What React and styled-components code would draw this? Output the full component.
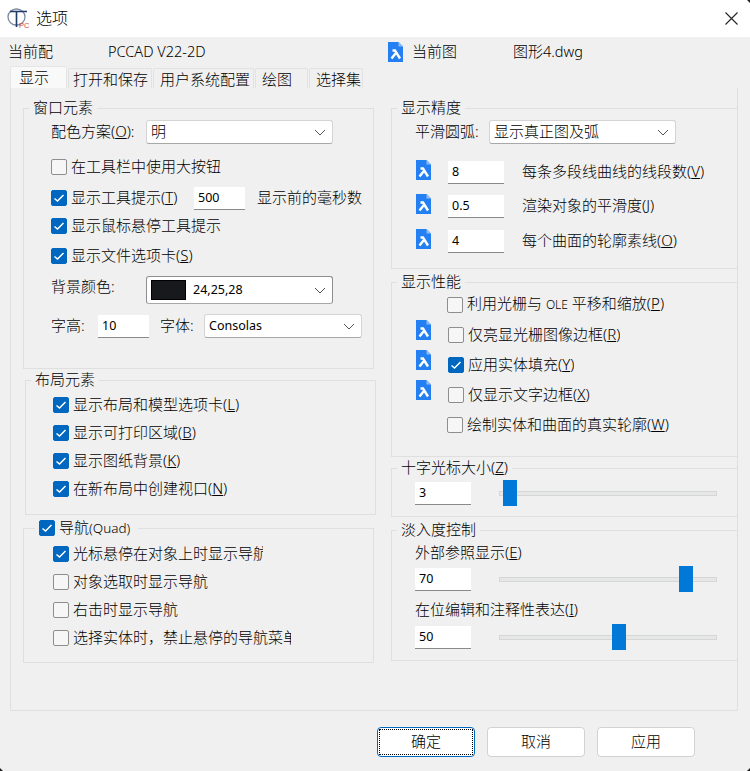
import React from "react";
import styled, { createGlobalStyle } from "styled-components";

const GlobalStyle = createGlobalStyle`
  html, body {
    margin: 0;
    background: #f0f0f0;
  }
  body {
    font-family: "Noto Sans", "Noto Sans CJK SC", sans-serif;
    font-size: 15px;
    font-weight: 300;
    line-height: 20px;
    color: #000;
  }
`;

const Dialog = styled.div`
  position: relative;
  display: flex;
  flex-direction: column;
  width: 750px;
  height: 771px;
  overflow: hidden;
  background: #f0f0f0;
`;
const Corner = styled.div`
  position: absolute;
  width: 3px;
  height: 3px;
  background: #222;
  ${(p) => (p.$left ? "left: 0;" : "right: 0;")}
  ${(p) => (p.$top ? "top: 0;" : "bottom: 0;")}
  clip-path: ${(p) =>
    p.$left
      ? "polygon(0 0, 100% 100%, 0 100%)"
      : p.$top
      ? "polygon(0 0, 100% 0, 100% 100%)"
      : "polygon(100% 0, 100% 100%, 0 100%)"};
`;
const TitleBar = styled.div`
  display: flex;
  align-items: center;
  flex: none;
  height: 37px;
  padding: 0 12px 0 7px;
  background: #fff;
`;
const Title = styled.span`
  margin-left: 4px;
  padding-bottom: 2px;
  font-size: 16px;
`;
const CloseButton = styled.svg`
  margin-left: auto;
  width: 13px;
  height: 13px;
`;
const InfoRow = styled.div`
  display: flex;
  align-items: center;
  flex: none;
  height: 29px;
  padding-left: 8px;
`;
const InfoText = styled.span`
  flex: none;
  width: ${(p) => p.$w}px;
  padding-bottom: 2px;
  white-space: nowrap;
`;
const FileMark = styled.svg`
  flex: none;
  width: 15px;
  height: 20px;
  margin-left: ${(p) => p.$ml || 0}px;
  margin-right: ${(p) => p.$mr || 0}px;
  align-self: ${(p) => (p.$top ? "flex-start" : "center")};
`;
const TabStrip = styled.div`
  display: flex;
  align-items: flex-end;
  flex: none;
  gap: 1px;
  height: 22px;
  margin-left: 10px;
`;
const Tab = styled.div`
  box-sizing: border-box;
  width: ${(p) => p.$w}px;
  height: ${(p) => (p.$active ? 22 : 20)}px;
  padding-left: ${(p) => p.$pl}px;
  border: 1px solid ${(p) => (p.$active ? "#e6e6e6" : "#e2e2e2")};
  border-bottom: none;
  border-radius: 2px 2px 0 0;
  background: ${(p) => (p.$active ? "#f9f9f9" : "#f0f0f0")};
  line-height: 20px;
  white-space: nowrap;
`;
const Pane = styled.div`
  box-sizing: border-box;
  display: flex;
  flex: none;
  width: 728px;
  height: 623px;
  margin-left: 10px;
  padding-top: 20px;
  border: 1px solid #e0e0e0;
  border-top: none;
`;
const LeftColumn = styled.div`
  flex: none;
  width: 380px;
  padding-left: 12px;
  box-sizing: border-box;
`;
const RightColumn = styled.div`
  flex: none;
  width: 347px;
`;
const Group = styled.div`
  position: relative;
  box-sizing: border-box;
  width: ${(p) => p.$w || "100%"};
  height: ${(p) => p.$h}px;
  margin-top: ${(p) => p.$mt || 0}px;
  margin-left: ${(p) => p.$ml || 0}px;
  padding-left: ${(p) => p.$pl}px;
  border: 1px solid #dfdfdf;
  display: flow-root;
`;
const Legend = styled.div`
  position: absolute;
  top: -11px;
  left: ${(p) => p.$left || 5}px;
  display: flex;
  align-items: center;
  gap: 4px;
  height: 20px;
  padding: 0 ${(p) => p.$pr || 4}px 0 4px;
  background: #f0f0f0;
  white-space: nowrap;
`;
const LegendText = styled.span`
  padding-bottom: 2px;
`;
const Row = styled.div`
  display: flex;
  align-items: center;
  height: ${(p) => p.$h || 24}px;
  margin-top: ${(p) => p.$mt || 0}px;
`;
const Text = styled.span`
  flex: none;
  box-sizing: content-box;
  white-space: nowrap;
  overflow: hidden;
  width: ${(p) => (p.$w ? `${p.$w}px` : "auto")};
  margin-left: ${(p) => p.$ml || 0}px;
  padding-bottom: 2px;
  align-self: ${(p) => (p.$top ? "flex-start" : "center")};
`;
const Latin = styled.span`
  font-size: ${(p) => p.$size}px;
  font-weight: 300;
`;
const Box = styled.span`
  box-sizing: border-box;
  display: flex;
  align-items: center;
  justify-content: center;
  flex: none;
  width: 16px;
  height: 16px;
  margin-right: 4px;
  border-radius: 2px;
  border: 1px solid ${(p) => (p.$on ? "#0067c0" : "#8e8e8e")};
  background: ${(p) => (p.$on ? "#0067c0" : "#f6f6f6")};
`;
const LegendBox = styled(Box)`
  margin-right: 0;
`;
const Select = styled.div`
  box-sizing: border-box;
  display: flex;
  align-items: center;
  flex: none;
  width: ${(p) => p.$w}px;
  height: ${(p) => p.$h || 24}px;
  padding: 0 4px;
  background: #fff;
  border: 1px solid ${(p) => (p.$focus ? "#8f8f8f" : "#d4d4d4")};
  border-bottom-color: #a8a8a8;
  border-radius: 3px;
  white-space: nowrap;
`;
const SelectValue = styled.span`
  padding-bottom: 2px;
`;
const SelectLatin = styled.span`
  font-size: 12.5px;
  font-weight: 400;
`;
const Swatch = styled.span`
  box-sizing: border-box;
  flex: none;
  width: 35px;
  height: 20px;
  margin-right: 7px;
  border: 1px solid #000;
  background: #18191c;
`;
const Chevron = styled.svg`
  margin-left: auto;
  margin-right: 2px;
  width: 12px;
  height: 7px;
`;
const NumberField = styled.div`
  box-sizing: border-box;
  flex: none;
  width: ${(p) => p.$w}px;
  height: 23px;
  margin-left: ${(p) => p.$ml || 0}px;
  padding-left: 4px;
  background: #fff;
  border-bottom: 1px solid #8a8a8a;
  font-size: 12.5px;
  font-weight: 400;
  line-height: 22px;
`;
const Slider = styled.div`
  position: relative;
  display: flex;
  align-items: center;
  flex: none;
  width: 218px;
  height: 26px;
  margin-left: 28px;
`;
const Track = styled.div`
  box-sizing: border-box;
  width: 100%;
  height: 5px;
  background: #e6e7e7;
  border: 1px solid #d6d6d6;
`;
const Thumb = styled.div`
  position: absolute;
  top: 0;
  left: ${(p) => p.$left}px;
  width: 14px;
  height: 26px;
  background: #0078d7;
`;
const ButtonBar = styled.div`
  display: flex;
  gap: 12px;
  flex: none;
  margin: 16px 0 0 377px;
`;
const Button = styled.div`
  position: relative;
  box-sizing: border-box;
  width: 98px;
  height: 30px;
  background: #fff;
  border: 1px solid ${(p) => (p.$primary ? "#0067c0" : "#d2d2d2")};
  border-radius: 4px;
  text-align: center;
  line-height: 26px;
  ${(p) =>
    p.$primary &&
    `&::after {
      content: "";
      position: absolute;
      inset: 1px;
      border: 1px dotted #000;
    }`}
`;

const Tick = () => (
  <svg width="12" height="10" viewBox="0 0 12 10">
    <path d="M1.5 5.5 L4.5 8 L10.5 2" fill="none" stroke="#fff" strokeWidth="1.5" />
  </svg>
);

const Check = ({ on, children, w }) => (
  <>
    <Box $on={on}>{on && <Tick />}</Box>
    <Text $w={w}>{children}</Text>
  </>
);

const DocIcon = (props) => (
  <FileMark viewBox="0 0 15 20" {...props}>
    <path d="M0 0 H10.5 L15 4.5 V20 H0 Z" fill="#2480f2" />
    <path d="M10.5 0 L15 4.5 H10.5 Z" fill="#8fbcf6" />
    <path d="M4.5 8.5 H7 L12 16.5 M7.5 11.5 L3.5 16.5" fill="none" stroke="#fff" strokeWidth="2.4" />
  </FileMark>
);

const Arrow = () => (
  <Chevron viewBox="0 0 12 7">
    <path d="M1 1 L6 6 L11 1" fill="none" stroke="#555" strokeWidth="1" />
  </Chevron>
);

const Logo = () => (
  <svg width="25" height="24" viewBox="0 0 25 24">
    <ellipse cx="9.5" cy="10" rx="8.5" ry="8" fill="none" stroke="#7c8aa0" strokeWidth="1.3" />
    <path d="M3 4.5 H20 M9.5 4.5 V20" fill="none" stroke="#1e3a68" strokeWidth="1.6" />
    <text x="12" y="21" fontSize="7.5" fontFamily="Liberation Sans, sans-serif" fill="#d04a3c">PC</text>
  </svg>
);

const App = () => (
  <Dialog>
    <GlobalStyle />
    <Corner $top />
    <Corner $left />
    <Corner />
    <TitleBar>
      <Logo />
      <Title>选项</Title>
      <CloseButton viewBox="0 0 13 13">
        <path d="M0.5 0.5 L12.5 12.5 M12.5 0.5 L0.5 12.5" stroke="#222" strokeWidth="1.1" />
      </CloseButton>
    </TitleBar>

    <InfoRow>
      <InfoText $w={100}>当前配</InfoText>
      <InfoText $w={280}><Latin $size={14.5}>PCCAD V22-2D</Latin></InfoText>
      <DocIcon $mr={9} />
      <InfoText $w={101}>当前图</InfoText>
      <InfoText>图形<Latin $size={14.5}>4.dwg</Latin></InfoText>
    </InfoRow>

    <TabStrip>
      <Tab $w={57} $pl={8} $active>显示</Tab>
      <Tab $w={84} $pl={4}>打开和保存</Tab>
      <Tab $w={101} $pl={6}>用户系统配置</Tab>
      <Tab $w={53} $pl={6}>绘图</Tab>
      <Tab $w={54} $pl={6}>选择集</Tab>
    </TabStrip>

    <Pane>
      <LeftColumn>
        <Group $w="351px" $h={261} $pl={27}>
          <Legend><LegendText>窗口元素</LegendText></Legend>
          <Row $mt={11}>
            <Text $w={95}>配色方案(<u>O</u>):</Text>
            <Select $w={187}><SelectValue>明</SelectValue><Arrow /></Select>
          </Row>
          <Row $mt={11}><Check>在工具栏中使用大按钮</Check></Row>
          <Row $mt={7}>
            <Check on w={123}>显示工具提示(<u>T</u>)</Check>
            <NumberField $w={51}>500</NumberField>
            <Text $ml={12}>显示前的毫秒数</Text>
          </Row>
          <Row $mt={4}><Check on>显示鼠标悬停工具提示</Check></Row>
          <Row $mt={6}><Check on>显示文件选项卡(<u>S</u>)</Check></Row>
          <Row $mt={8} $h={28}>
            <Text $w={95} $top>背景颜色:</Text>
            <Select $w={187} $h={28} $focus>
              <Swatch />
              <SelectLatin>24,25,28</SelectLatin>
              <Arrow />
            </Select>
          </Row>
          <Row $mt={10}>
            <Text $w={47}>字高:</Text>
            <NumberField $w={51}>10</NumberField>
            <Text $w={44} $ml={11}>字体:</Text>
            <Select $w={158}><SelectLatin>Consolas</SelectLatin><Arrow /></Select>
          </Row>
        </Group>

        <Group $w="351px" $h={135} $mt={11} $ml={2} $pl={27}>
          <Legend><LegendText>布局元素</LegendText></Legend>
          <Row $mt={12}><Check on>显示布局和模型选项卡(<u>L</u>)</Check></Row>
          <Row $mt={4}><Check on>显示可打印区域(<u>B</u>)</Check></Row>
          <Row $mt={4}><Check on>显示图纸背景(<u>K</u>)</Check></Row>
          <Row $mt={4}><Check on>在新布局中创建视口(<u>N</u>)</Check></Row>
        </Group>

        <Group $w="351px" $h={135} $mt={13} $pl={29}>
          <Legend $left={11} $pr={8}>
            <LegendBox $on><Tick /></LegendBox>
            <LegendText>导航<Latin $size={13.5}>(Quad)</Latin></LegendText>
          </Legend>
          <Row $mt={13}><Check on w={190}>光标悬停在对象上时显示导航</Check></Row>
          <Row $mt={4}><Check>对象选取时显示导航</Check></Row>
          <Row $mt={4}><Check>右击时显示导航</Check></Row>
          <Row $mt={4}><Check w={218}>选择实体时，禁止悬停的导航菜单</Check></Row>
        </Group>
      </LeftColumn>

      <RightColumn>
        <Group $h={161} $pl={23}>
          <Legend><LegendText>显示精度</LegendText></Legend>
          <Row $mt={11}>
            <Text $w={74}>平滑圆弧:</Text>
            <Select $w={187}><SelectValue>显示真正图及弧</SelectValue><Arrow /></Select>
          </Row>
          <Row $mt={16}>
            <DocIcon $top $ml={1} />
            <NumberField $w={56} $ml={17}>8</NumberField>
            <Text $ml={18}>每条多段线曲线的线段数(<u>V</u>)</Text>
          </Row>
          <Row $mt={10}>
            <DocIcon $top $ml={1} />
            <NumberField $w={56} $ml={17}>0.5</NumberField>
            <Text $ml={18}>渲染对象的平滑度(<u>J</u>)</Text>
          </Row>
          <Row $mt={11}>
            <DocIcon $top $ml={1} />
            <NumberField $w={56} $ml={17}>4</NumberField>
            <Text $ml={18}>每个曲面的轮廓素线(<u>O</u>)</Text>
          </Row>
        </Group>

        <Group $h={175} $mt={13} $pl={55}>
          <Legend><LegendText>显示性能</LegendText></Legend>
          <Row $mt={7} $h={30}><Check>利用光栅与 <Latin $size={12}>OLE</Latin> 平移和缩放(<u>P</u>)</Check></Row>
          <Row $h={30}>
            <DocIcon $top $ml={-31} $mr={17} />
            <Check>仅亮显光栅图像边框(<u>R</u>)</Check>
          </Row>
          <Row $h={30}>
            <DocIcon $top $ml={-31} $mr={17} />
            <Check on>应用实体填充(<u>Y</u>)</Check>
          </Row>
          <Row $h={30}>
            <DocIcon $top $ml={-31} $mr={17} />
            <Check>仅显示文字边框(<u>X</u>)</Check>
          </Row>
          <Row $h={30}><Check>绘制实体和曲面的真实轮廓(<u>W</u>)</Check></Row>
        </Group>

        <Group $h={49} $mt={11} $pl={23}>
          <Legend><LegendText>十字光标大小(<u>Z</u>)</LegendText></Legend>
          <Row $mt={11} $h={26}>
            <NumberField $w={56}>3</NumberField>
            <Slider><Track /><Thumb $left={4} /></Slider>
          </Row>
        </Group>

        <Group $h={131} $mt={13} $pl={23}>
          <Legend><LegendText>淡入度控制</LegendText></Legend>
          <Row $mt={12} $h={20}><Text>外部参照显示(<u>E</u>)</Text></Row>
          <Row $mt={3} $h={26}>
            <NumberField $w={56}>70</NumberField>
            <Slider><Track /><Thumb $left={180} /></Slider>
          </Row>
          <Row $mt={8} $h={20}><Text>在位编辑和注释性表达(<u>I</u>)</Text></Row>
          <Row $mt={4} $h={26}>
            <NumberField $w={56}>50</NumberField>
            <Slider><Track /><Thumb $left={113} /></Slider>
          </Row>
        </Group>
      </RightColumn>
    </Pane>

    <ButtonBar>
      <Button $primary>确定</Button>
      <Button>取消</Button>
      <Button>应用</Button>
    </ButtonBar>
  </Dialog>
);

export default App;
